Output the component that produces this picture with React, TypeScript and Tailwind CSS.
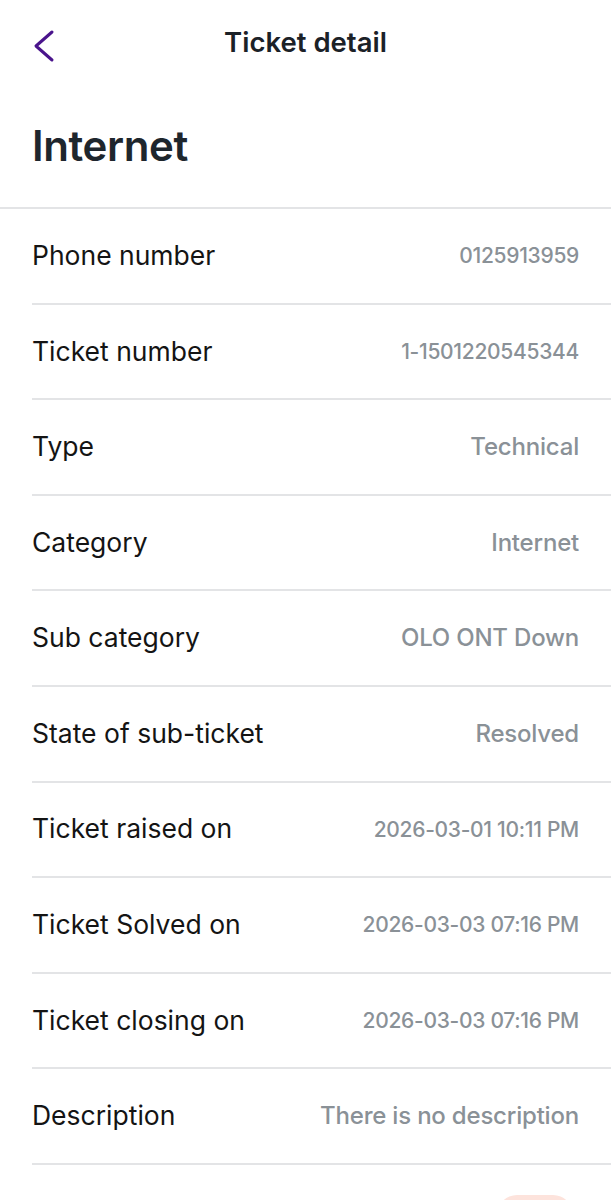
const rows = [
  { label: 'Phone number', value: '0125913959', numeric: true },
  { label: 'Ticket number', value: '1-1501220545344', numeric: true },
  { label: 'Type', value: 'Technical' },
  { label: 'Category', value: 'Internet' },
  { label: 'Sub category', value: 'OLO ONT Down' },
  { label: 'State of sub-ticket', value: 'Resolved' },
  { label: 'Ticket raised on', value: '2026-03-01 10:11 PM', numeric: true },
  { label: 'Ticket Solved on', value: '2026-03-03 07:16 PM', numeric: true },
  { label: 'Ticket closing on', value: '2026-03-03 07:16 PM', numeric: true },
  { label: 'Description', value: 'There is no description' },
]

export default function App() {
  return (
    <div className="w-[611px] h-[1200px] overflow-hidden bg-white font-['Inter',sans-serif]">
      {/* HEADER */}
      <div className="relative flex h-[85px] items-center justify-center">
        <svg
          className="absolute left-[30px] top-[26px]"
          width="28"
          height="40"
          viewBox="0 0 28 40"
          fill="none"
        >
          <polyline
            points="22,6 6,20 22,34"
            stroke="#4a148c"
            strokeWidth="3"
            strokeLinecap="round"
            strokeLinejoin="round"
          />
        </svg>
        <h1 className="text-[27.5px] font-semibold text-[#1b2127]">Ticket detail</h1>
      </div>

      <div className="flex h-[124px] items-center border-b-2 border-[#e3e4e6] px-8 pb-[2px]">
        <h2 className="text-[42px] font-semibold tracking-[-0.4px] text-[#1e262d]">Internet</h2>
      </div>

      {/* DETAIL ROWS */}
      <ul className="ml-8">
        {rows.map(row => (
          <li
            key={row.label}
            className="flex h-[95.6px] items-center justify-between border-b-2 border-[#e3e4e6] pr-8"
          >
            <span className="text-[26.5px] text-[#141414]">{row.label}</span>
            <span
              className={
                row.numeric
                  ? 'text-[21px] font-medium tracking-[-0.3px] text-[#8a9197]'
                  : 'text-[24px] font-medium tracking-[-0.2px] text-[#8a9197]'
              }
            >
              {row.value}
            </span>
          </li>
        ))}
      </ul>

      <div className="mt-[30px] flex justify-end pr-[38px]">
        <div className="h-[40px] w-[76px] rounded-full bg-[#fde3dc]" />
      </div>
    </div>
  )
}
